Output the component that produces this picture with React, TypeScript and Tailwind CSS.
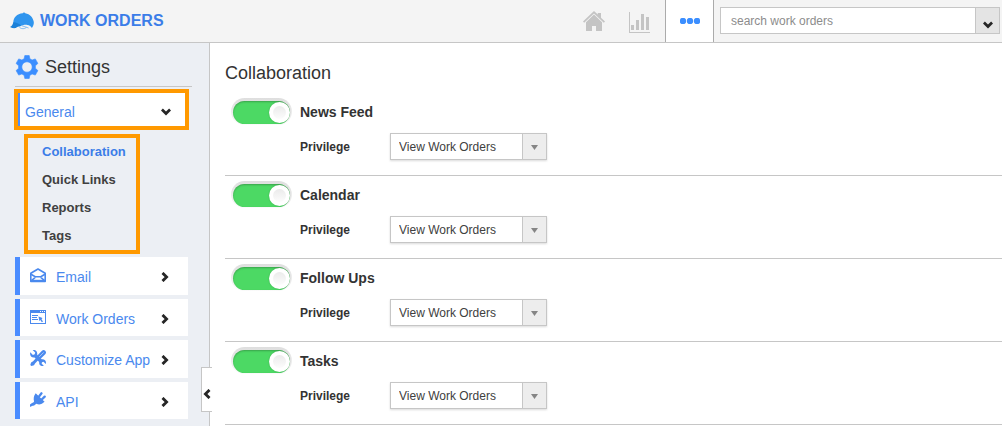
import * as React from "react"
import clsx from "clsx"

const submenu = ["Collaboration", "Quick Links", "Reports", "Tags"]

const sections = ["News Feed", "Calendar", "Follow Ups", "Tasks"]

const privileges = ["View Work Orders", "Create Work Orders", "Edit Work Orders"]

function Chevron({ className }: { className?: string }) {
  return (
    <svg
      viewBox="0 0 10 10"
      className={clsx("h-[10px] w-[10px] shrink-0", className)}
      fill="none"
      stroke="#262626"
      strokeWidth="2.8"
      aria-hidden="true"
    >
      <path d="M2.500.900 6.600 5l-4.100 4.100" />
    </svg>
  )
}

function CapLogo() {
  return (
    <svg viewBox="0 0 24 18" className="h-[18px] w-6 shrink-0" aria-hidden="true">
      <path
        fill="#2f95ee"
        d="M3.300 10.500C3.300 5.500 7 1.700 12.700 1.300L14 .3l1.300.9c4.600.8 7.900 4.300 8.500 8.800.2 2-.5 4-1.900 6-.8-1.800-2.400-2.900-4.600-3.100-2.700-.3-5.200.4-7.500 1.700l-6.500-.6Z"
      />
      <path fill="#1b80d8" d="M3.300 10.200c3 .2 5.800 1.300 8 3.600-2.300.2-4.100 1-5.500 2.300C3.900 16.400 1.900 16.100 0 15c1.700-.9 2.900-2.500 3.300-4.800Z" />
      <path fill="none" stroke="#7fb9ee" strokeWidth=".9" d="M9.500 15.500c2.200 1.700 4.900 1.600 7.100-.2M11.600 13.700c2.400.3 4.200 1.700 7 2.300" />
    </svg>
  )
}

function GearIcon() {
  return (
    <svg viewBox="0 0 24 24" className="h-6 w-6 shrink-0" aria-hidden="true">
      <path
        fill="#3b8eff"
        fillRule="evenodd"
        stroke="#3b8eff"
        strokeWidth=".6"
        strokeLinejoin="round"
        d="M9.800.500h4.400l.7 3.300 2.200 1.200 3.200-1.100 2.600 4.500-2.500 2.400v2.400l2.500 2.400-2.600 4.500-3.200-1.100-2.200 1.200-.7 3.300H9.800l-.7-3.300L6.900 19l-3.200 1.100-2.600-4.500 2.500-2.400v-2.400L1.100 8.400l2.600-4.500L6.900 5l2.200-1.200ZM12 6.800a5.200 5.200 0 1 0 0 10.400 5.200 5.200 0 0 0 0-10.400Z"
      />
    </svg>
  )
}

function HomeIcon() {
  return (
    <svg viewBox="0 0 22 21" className="h-[21px] w-[22px]" fill="#c4c4c4" aria-hidden="true">
      <path d="M11 0 0 10.600l1.200 1.200L11 2.500l9.800 9.300 1.200-1.200-4-3.900V2h-3.200v1.600Z" />
      <path d="M11 3.500 3 11.200V20h6v-5h4v5h6v-8.800Z" />
    </svg>
  )
}

function ChartIcon() {
  return (
    <svg viewBox="0 0 21 21" className="h-[21px] w-[21px]" fill="#c4c4c4" shapeRendering="crispEdges" aria-hidden="true">
      <path d="M0 0h1v20h20v1H0ZM2 13h3v5H2ZM7 8h3v10H7ZM12 2h3v16h-3ZM17 5h3v13h-3Z" />
    </svg>
  )
}

function MailIcon() {
  return (
    <svg viewBox="0 0 16 15" className="h-[15px] w-4" fill="none" stroke="#4a89ee" strokeWidth="1.600" aria-hidden="true">
      <path d="M.8 5.300 8 1l7.200 4.300v8.200H.8Z" strokeLinejoin="round" />
      <path d="m1 6.200 4.200 2.600h5.600L15 6.200M1.200 12.800l4-3.400M14.800 12.800l-4-3.400" />
      <path strokeWidth="2" d="M1.500 12.800h13" />
    </svg>
  )
}

function WindowIcon() {
  return (
    <svg viewBox="0 0 16 14" className="h-[14px] w-4" fill="#4a89ee" aria-hidden="true">
      <path fillRule="evenodd" d="M0 0h16v14H0ZM1 3v10h14V3ZM10 1v1h1V1ZM12 1v1h1V1ZM14 1v1h1V1Z" />
      <path d="M2 5h6v1H2ZM2 7h5v1H2ZM2 9h6v1H2ZM8.500 6.500l4 1.500-1 1.200 1.500 2.300-1.200.8-1.400-2.200-1.100 1Z" />
    </svg>
  )
}

function ToolsIcon() {
  return (
    <svg viewBox="0 0 16 16" className="h-4 w-4" aria-hidden="true">
      <path
        fill="#4a89ee"
        d="M2.600 0 5.200 2.500 4.700 4.300 2.900 4.900.3 2.300C-.6 5.300 1.500 8 4.500 7.400l4.700 4.700c-.4 2.900 1.800 4.600 4.700 3.800l-2.300-2.300.4-1.400 1.500-.4 2.300 2.200c.8-2.900-1.100-5.200-4.100-4.700L7.200 4.800C7.700 1.600 5.500-.7 2.600 0Z"
      />
      <path fill="none" stroke="#4a89ee" strokeWidth="4.600" strokeLinecap="round" d="m9.500 6.600 4.100-4.100" />
      <path fill="none" stroke="#a9c9fa" strokeWidth="1" d="m9.300 6.800 4.400-4.400" />
      <path fill="#4a89ee" d="m7.600 6.200 2.200 2.200-4.800 5-1 1.900-2.700.7L.3 15l.8-2.600 2-1.200Z" />
    </svg>
  )
}

function PlugIcon() {
  return (
    <svg viewBox="0 0 16 15" className="h-[15px] w-4" aria-hidden="true">
      <path
        fill="#4a89ee"
        d="M5.700 1.200 14.600 9.700l-1.400 1.100c-2 1.900-4.700 2-6.800 1L5 12.800l-.8.8-2.400.3L.6 15 0 14.200v-1.700l2-1.600 1.300-.3.8-1.100C3.300 7 3.600 3.600 5.700 1.200Z"
      />
      <path fill="none" stroke="#4a89ee" strokeWidth="2.300" strokeLinecap="round" d="m9.200 4.200 2.300-2.900M12 7.300l2.700-2.700" />
    </svg>
  )
}

const modules = [
  { label: "Email", icon: MailIcon },
  { label: "Work Orders", icon: WindowIcon },
  { label: "Customize App", icon: ToolsIcon },
  { label: "API", icon: PlugIcon },
]

function Header() {
  return (
    <header className="flex h-[43px] items-stretch border-b border-[#c6c6c6] bg-[#f4f4f4]">
      <a href="#" className="flex items-center gap-[6px] pl-[10px] text-base font-bold text-[#3b7de8]">
        <CapLogo />
        WORK ORDERS
      </a>
      <nav className="ml-auto flex items-stretch">
        <a href="#" aria-label="Home" className="flex w-[46px] items-center justify-center">
          <HomeIcon />
        </a>
        <a href="#" aria-label="Reports" className="flex w-[44px] items-center justify-center pt-[2px]">
          <ChartIcon />
        </a>
        <a
          href="#"
          aria-label="More"
          className="ml-1 flex w-[49px] items-center justify-center border-x border-[#ababab] bg-white"
        >
          <svg viewBox="0 0 20 6" className="h-[6px] w-5" fill="#3b8eff" aria-hidden="true">
            <circle cx="3" cy="3" r="3.200" />
            <circle cx="10" cy="3" r="3.200" />
            <circle cx="17" cy="3" r="3.200" />
          </svg>
        </a>
      </nav>
      <form className="mt-[7px] mr-[2px] ml-[6px] flex h-[27px] w-[280px] border border-[#c6c6c6] bg-white">
        <input
          type="text"
          aria-label="search work orders"
          placeholder="search work orders"
          className="min-w-0 flex-1 px-[10px] text-xs outline-none placeholder:text-[#8c8c8c]"
        />
        <button
          type="button"
          aria-label="Search options"
          className="flex w-6 items-center justify-center border-l border-[#c6c6c6] bg-[#e4e4e4] pt-2"
        >
          <Chevron className="rotate-90" />
        </button>
      </form>
    </header>
  )
}

function Sidebar() {
  return (
    <aside className="relative w-[210px] shrink-0 border-r border-[#c6c6c6] bg-[#eceff4] pl-[14px]">
      <h2 className="mr-[17px] ml-px flex h-11 items-center gap-[6px] border-b border-[#c6c6c6] pt-1 text-lg text-[#333]">
        <GearIcon />
        Settings
      </h2>

      <div className="mt-[2px] w-[175px] border-4 border-[#ff9900]">
        <button
          type="button"
          className="flex h-[33px] w-full items-center justify-between border-l-2 border-[#4a8cff] bg-white pt-1 pr-[14px] pl-[5px] text-sm text-[#4a89ee]"
        >
          General
          <Chevron className="rotate-90" />
        </button>
      </div>

      <ul className="mt-1 ml-[10px] w-[116px] border-4 border-[#ff9900] pl-[14px]">
        {submenu.map((item, i) => (
          <li key={item}>
            <a
              href="#"
              className={clsx(
                "flex h-7 items-center text-[13px] font-bold",
                i === 0 ? "text-[#3b7de8]" : "text-[#404040]"
              )}
            >
              {item}
            </a>
          </li>
        ))}
      </ul>

      <div className="mt-[3px] ml-px flex w-[173px] flex-col gap-1">
        {modules.map(({ label, icon: Icon }) => (
          <button
            key={label}
            type="button"
            className="flex h-[37px] items-center border-l-[5px] border-[#4a8cff] bg-white pr-[18px] pl-[10px] text-sm whitespace-nowrap text-[#4a89ee] odd:h-[38px]"
          >
            <span className="w-[26px] shrink-0 pb-[2px]">
              <Icon />
            </span>
            <span className="flex-1 pt-[2px] text-left">{label}</span>
            <Chevron className="mt-[2px]" />
          </button>
        ))}
      </div>

      {/* Collapse handle */}
      <button
        type="button"
        aria-label="Collapse sidebar"
        className="absolute top-[324px] -right-[3px] flex h-[45px] w-[11px] items-center justify-center border-y border-l border-[#c6c6c6] bg-white pt-2"
      >
        <Chevron className="rotate-180" />
      </button>
    </aside>
  )
}

function Toggle({ label }: { label: string }) {
  const [on, setOn] = React.useState(true)

  return (
    <label className="relative block h-[27px] w-[61px] shrink-0 cursor-pointer rounded-full bg-gradient-to-b from-[#dedede] to-[#fafafa] px-[2px] pt-[3px]">
      <input
        type="checkbox"
        aria-label={label}
        checked={on}
        onChange={(e) => setOn(e.target.checked)}
        className="sr-only"
      />
      <span
        className={clsx(
          "flex h-[23px] items-center rounded-full shadow-[inset_0_1px_2px_rgba(0,0,0,0.25)]",
          on ? "justify-end bg-[#4cd964]" : "justify-start bg-gray-300"
        )}
      >
        <span className="flex h-[21px] w-[21px] items-center justify-center rounded-full bg-white shadow-[0_0_2px_rgba(0,0,0,0.2)]">
          <span className="h-[13px] w-[13px] rounded-full bg-gradient-to-b from-[#ebebeb] to-[#fcfcfc]" />
        </span>
      </span>
    </label>
  )
}

function Section({ name }: { name: string }) {
  const id = React.useId()

  return (
    <section className="flex h-[83px] gap-2 border-b border-[#c6c6c6] pt-[5px] pl-[6px]">
      <Toggle label={name} />
      <div>
        <h3 className="flex h-7 items-center text-sm font-bold text-[#333]">{name}</h3>
        <div className="mt-[7px] flex items-center">
          <label htmlFor={id} className="w-[90px] text-xs font-bold text-[#333]">
            Privilege
          </label>
          <div className="relative h-[27px] w-[157px] shadow-[0_1px_2px_rgba(0,0,0,0.15)]">
            <select
              id={id}
              className="h-full w-full appearance-none border border-[#c6c6c6] bg-white pr-7 pl-2 text-xs text-[#404040] outline-none"
            >
              {privileges.map((p) => (
                <option key={p}>{p}</option>
              ))}
            </select>
            <span className="pointer-events-none absolute inset-y-0 right-0 flex w-[25px] items-center justify-center border border-[#c6c6c6] bg-[#ededed] pt-[2px]">
              <svg viewBox="0 0 7 5" className="h-[5px] w-[7px]" fill="#858585" aria-hidden="true">
                <path d="M0 0h7L3.500 5Z" />
              </svg>
            </span>
          </div>
        </div>
      </div>
    </section>
  )
}

export default function App() {
  return (
    <div className="flex min-h-screen flex-col bg-white font-['Liberation_Sans',Arial,sans-serif]">
      <Header />
      <div className="flex flex-1">
        <Sidebar />
        <main className="min-w-0 flex-1 pl-[15px]">
          <h1 className="flex h-[50px] items-center pt-[10px] text-lg text-[#333]">Collaboration</h1>
          {sections.map((name) => (
            <Section key={name} name={name} />
          ))}
        </main>
      </div>
    </div>
  )
}
